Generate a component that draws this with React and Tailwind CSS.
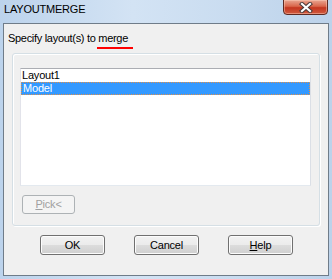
import React from "react";

const font = { fontFamily: '"Liberation Sans", Arial, sans-serif' };

function WinButton({ children, className = "" }) {
  return (
    <div
      className={
        "w-[65px] h-[20px] rounded-[3px] border border-[#707070] bg-[linear-gradient(to_bottom,#f2f2f2_0%,#ebebeb_50%,#dddddd_50%,#cfcfcf_100%)] shadow-[inset_0_0_0_1px_#fcfcfc] flex items-center justify-center text-[11px] text-black tracking-[-0.2px] " +
        className
      }
    >
      {children}
    </div>
  );
}

export default function App() {
  return (
    <div
      className="w-[332px] h-[279px] flex flex-col bg-[linear-gradient(to_right,#bcd3ec_0%,#d3e3f4_40%,#c9dcf0_70%,#bcd2ea_100%)] overflow-hidden"
      style={font}
    >
      {/* Title bar */}
      <div className="relative h-[23px] shrink-0">
        <div className="pl-[4px] pt-[3px] text-[11px] leading-[13px] text-[#000] tracking-[-0.2px]">
          LAYOUTMERGE
        </div>
        <div className="absolute left-[283px] top-[-1px] w-[45px] h-[16px] rounded-b-[4px] border border-[#5e2a22] bg-[linear-gradient(to_bottom,#e9a692_0%,#d9664b_45%,#c4361f_55%,#d05a3f_100%)] shadow-[inset_0_0_0_1px_rgba(255,210,190,0.45)] flex items-center justify-center">
          <svg width="14" height="11" viewBox="0 0 14 11">
            <path d="M3 2 L11 9 M11 2 L3 9" stroke="#4a3a3a" strokeWidth="4.2" strokeLinecap="square" />
            <path d="M3 2 L11 9 M11 2 L3 9" stroke="#ffffff" strokeWidth="2.2" strokeLinecap="square" />
          </svg>
        </div>
      </div>

      {/* Client area */}
      <div className="mx-[3px] mb-[3px] flex-1 border border-[#6f7c89] bg-[#f0f0f0] flex flex-col">
        <div className="pl-[4px] pt-[8px] text-[11px] leading-[13px] text-black tracking-[-0.3px]">
          Specify layout(s) to{" "}
          <span className="relative">
            merge
            <span className="absolute left-[-1px] right-[-5px] top-[15px] h-[2px] bg-[#ff0000]" />
          </span>
        </div>

        {/* Group box */}
        <div className="mt-[8px] mx-[8px] h-[173px] rounded-[3px] border border-[#d5dfe5] shadow-[inset_1px_1px_0_#ffffff,1px_1px_0_#ffffff] flex flex-col pl-[7px] pr-[8px] pt-[14px]">
          <div className="h-[118px] bg-white border border-t-[#abadb3] border-l-[#e2e3ea] border-r-[#dbdfe6] border-b-[#e3e9ef] flex flex-col text-[11px] leading-[13px] tracking-[-0.2px]">
            <div className="h-[13px] pl-[1px] text-black">Layout1</div>
            <div className="h-[13px] pl-[1px] bg-[#3399ff] text-white border border-dotted border-[#e0904a] leading-[11px]">
              Model
            </div>
          </div>
          <div className="mt-[9px] ml-[2px] w-[53px] h-[19px] rounded-[3px] border border-[#adb2b5] bg-[#f4f4f4] flex items-center justify-center text-[11px] text-[#a0a0a0] tracking-[-0.2px]">
            <span className="underline underline-offset-[1px]">P</span>ick&lt;
          </div>
        </div>

        {/* Buttons */}
        <div className="mt-[9px] pl-[36px] flex gap-[29px]">
          <WinButton>OK</WinButton>
          <WinButton>Cancel</WinButton>
          <WinButton>
            <span>
              <span className="underline underline-offset-[1px]">H</span>elp
            </span>
          </WinButton>
        </div>
      </div>
    </div>
  );
}
